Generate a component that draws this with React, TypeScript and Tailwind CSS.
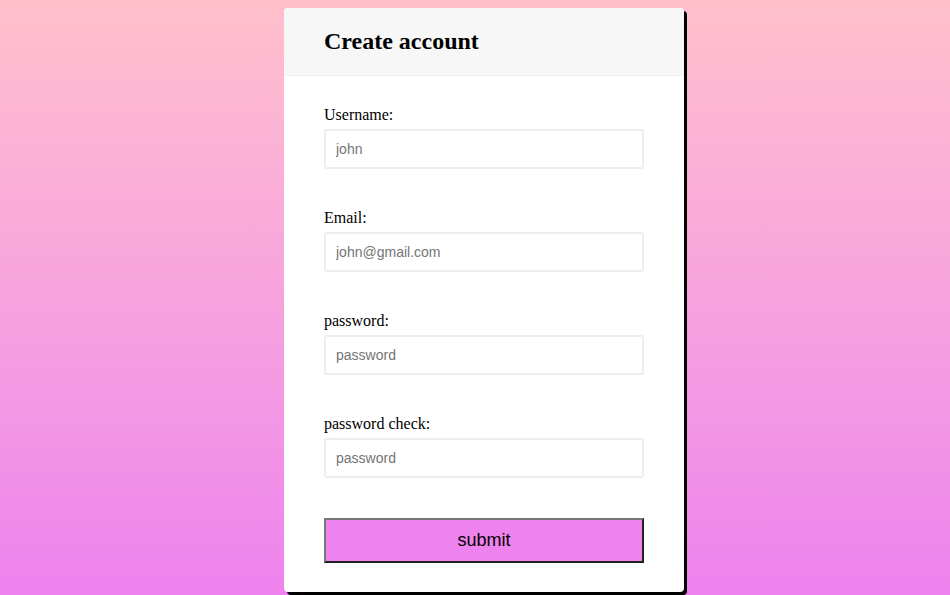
import React from 'react';

const fields = [
    { label: 'Username:', placeholder: 'john', type: 'text' },
    { label: 'Email:', placeholder: 'john@gmail.com', type: 'email' },
    { label: 'password:', placeholder: 'password', type: 'password' },
    { label: 'password check:', placeholder: 'password', type: 'password' },
];

const App = () => {
    return (
        <div className="flex min-h-[595px] justify-center bg-gradient-to-b from-[#ffc0cb] to-[#ee82ee] pl-[18px] pt-2 font-['Liberation_Serif',serif]">
            {/* 카드 */}
            <div className="w-[400px] h-[584px] overflow-hidden rounded-[4px] bg-white shadow-[3px_3px_0_#000]">
                <div className="flex h-[68px] items-center border-b border-[#eeeeee] bg-[#f7f7f7] px-10">
                    <h1 className="-mt-[2px] text-[24px] font-bold text-black">Create account</h1>
                </div>

                <form className="px-10 pt-[30px]" onSubmit={(e) => e.preventDefault()}>
                    {fields.map((f) => (
                        <div key={f.label} className="mb-[40px]">
                            <label className="block text-[16px] leading-[18px] text-black">{f.label}</label>
                            <input
                                type={f.type}
                                placeholder={f.placeholder}
                                className="mt-[5px] block h-[40px] w-[320px] rounded-[3px] border-2 border-[#eeeeee] px-[10px] font-['Liberation_Sans',sans-serif] text-[14px] text-black outline-none placeholder:text-[#757575]"
                            />
                        </div>
                    ))}
                    <button
                        type="submit"
                        className="mt-[8px] block h-[45px] w-[320px] border-2 border-t-[#767676] border-l-[#767676] border-b-[#222] border-r-[#222] bg-[#ee82ee] font-['Liberation_Sans',sans-serif] text-[18px] text-black"
                    >
                        submit
                    </button>
                </form>
            </div>
        </div>
    );
};

export default App;
